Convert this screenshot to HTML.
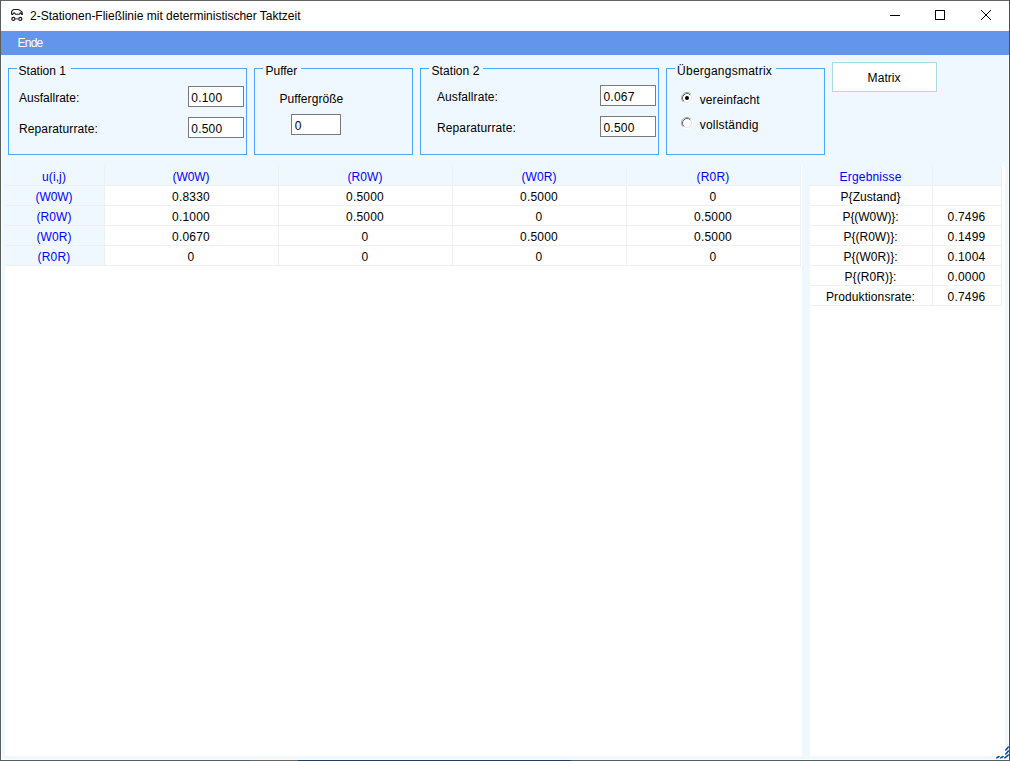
<!DOCTYPE html>
<html><head><meta charset="utf-8">
<style>
html,body{margin:0;padding:0;}
body{width:1010px;height:761px;position:relative;overflow:hidden;background:#F0F8FF;font-family:"Liberation Sans",sans-serif;font-size:12px;color:#000;}
.a{position:absolute;white-space:nowrap;line-height:14px;}
.b{position:absolute;box-sizing:border-box;}
.gb{position:absolute;box-sizing:border-box;border:1px solid #4AA8FF;}
.gl{position:absolute;box-sizing:border-box;background:#F0F8FF;line-height:14px;white-space:nowrap;}
.tb{position:absolute;box-sizing:border-box;border:1px solid #7A7A7A;background:#fff;}
.c{position:absolute;white-space:nowrap;line-height:14px;text-align:center;margin-left:-0.5px;}
.h{color:#0000FF;}
.vl{position:absolute;width:1px;background:#F0F0F0;}
.hl{position:absolute;height:1px;background:#F0F0F0;}
</style></head><body>
<!-- title bar -->
<div class="b" style="left:0;top:0;width:1010px;height:31px;background:#fff;"></div>
<svg class="b" style="left:0;top:0" width="40" height="31" viewBox="0 0 40 31">
  <path d="M11.7,14.4 C11.3,12.4 11.9,10 14,9.5 L18.2,9.5 Q19.2,9.6 20.9,11.1 Q22.6,11.9 22.4,14.4 L21.6,14.4 Q20.6,11.4 19.3,14.2 L15.6,14.2 Q14.1,11.4 12.6,14.4 Z" fill="none" stroke="#1a1a1a" stroke-width="1.15" stroke-linejoin="round"/>
  <ellipse cx="13.4" cy="18.9" rx="1.55" ry="1.55" fill="none" stroke="#1a1a1a" stroke-width="1.2"/>
  <ellipse cx="20.3" cy="18.9" rx="1.55" ry="1.55" fill="none" stroke="#1a1a1a" stroke-width="1.2"/>
  <line x1="14.9" y1="18.9" x2="18.8" y2="18.9" stroke="#555" stroke-width="1.2"/>
</svg>
<div class="a" style="left:30px;top:9px;">2-Stationen-Fließlinie mit deterministischer Taktzeit</div>
<div class="b" style="left:890px;top:15px;width:10px;height:1px;background:#000"></div>
<div class="b" style="left:935px;top:10px;width:10px;height:10px;border:1px solid #000"></div>
<svg class="b" style="left:981px;top:10px" width="10" height="10" viewBox="0 0 10 10"><path d="M0,0 L10,10 M10,0 L0,10" stroke="#000" stroke-width="1"/></svg>
<!-- menu -->
<div class="b" style="left:0;top:31px;width:1010px;height:24px;background:#6495ED;"></div>
<div class="a" style="left:17.5px;top:36px;color:#fff;letter-spacing:-0.75px">Ende</div>

<!-- Station 1 -->
<div class="gb" style="left:8px;top:68px;width:239px;height:87px;"></div>
<div class="gl" style="left:17px;top:64px;width:54px;padding-left:1.6px;letter-spacing:0px;">Station 1</div>
<div class="a" style="left:19px;top:91px;letter-spacing:0.02px;">Ausfallrate:</div>
<div class="a" style="left:19px;top:122px;letter-spacing:0.116px;">Reparaturrate:</div>
<div class="tb" style="left:188px;top:86px;width:56px;height:21px;"></div>
<div class="a" style="left:191.3px;top:91px;letter-spacing:0.194px;">0.100</div>
<div class="tb" style="left:188px;top:117px;width:56px;height:21px;"></div>
<div class="a" style="left:191.3px;top:122px;letter-spacing:0.194px;">0.500</div>

<!-- Puffer -->
<div class="gb" style="left:254px;top:68px;width:159px;height:87px;"></div>
<div class="gl" style="left:263px;top:64px;width:38px;padding-left:2.5px;letter-spacing:-0.003px;">Puffer</div>
<div class="a" style="left:279.5px;top:92px;letter-spacing:0.058px;">Puffergröße</div>
<div class="tb" style="left:291px;top:114px;width:50px;height:21px;"></div>
<div class="a" style="left:294.8px;top:119px;letter-spacing:0.326px;">0</div>

<!-- Station 2 -->
<div class="gb" style="left:420px;top:68px;width:239px;height:87px;"></div>
<div class="gl" style="left:429px;top:64px;width:54px;padding-left:2.5px;letter-spacing:0.070px;">Station 2</div>
<div class="a" style="left:437px;top:90px;letter-spacing:0.081px;">Ausfallrate:</div>
<div class="a" style="left:437px;top:121px;letter-spacing:0.116px;">Reparaturrate:</div>
<div class="tb" style="left:600px;top:85px;width:56px;height:21px;"></div>
<div class="a" style="left:603.5px;top:90px;letter-spacing:0.194px;">0.067</div>
<div class="tb" style="left:600px;top:116px;width:56px;height:21px;"></div>
<div class="a" style="left:603.5px;top:121px;letter-spacing:0.194px;">0.500</div>

<!-- Uebergangsmatrix -->
<div class="gb" style="left:666px;top:68px;width:159px;height:87px;"></div>
<div class="gl" style="left:675px;top:64px;width:101px;padding-left:2.05px;letter-spacing:0.245px;">Übergangsmatrix</div>
<svg class="b" style="left:681px;top:92px" width="12" height="12" viewBox="0 0 12 12">
  <circle cx="6" cy="6" r="5" fill="#fff"/>
  <path d="M2.11,9.89 A5.5,5.5 0 0 0 9.89,2.11" fill="none" stroke="#FFFFFF" stroke-width="1"/>
  <path d="M2.82,9.18 A4.5,4.5 0 0 0 9.18,2.82" fill="none" stroke="#E3E3E3" stroke-width="1"/>
  <path d="M2.11,9.89 A5.5,5.5 0 0 1 9.89,2.11" fill="none" stroke="#A0A0A0" stroke-width="1"/>
  <path d="M2.82,9.18 A4.5,4.5 0 0 1 9.18,2.82" fill="none" stroke="#696969" stroke-width="1"/>
  <circle cx="6" cy="6" r="2" fill="#000"/>
</svg>
<div class="a" style="left:699.7px;top:93px;letter-spacing:0.118px;">vereinfacht</div>
<svg class="b" style="left:681px;top:117px" width="12" height="12" viewBox="0 0 12 12">
  <circle cx="6" cy="6" r="5" fill="#fff"/>
  <path d="M2.11,9.89 A5.5,5.5 0 0 0 9.89,2.11" fill="none" stroke="#FFFFFF" stroke-width="1"/>
  <path d="M2.82,9.18 A4.5,4.5 0 0 0 9.18,2.82" fill="none" stroke="#E3E3E3" stroke-width="1"/>
  <path d="M2.11,9.89 A5.5,5.5 0 0 1 9.89,2.11" fill="none" stroke="#A0A0A0" stroke-width="1"/>
  <path d="M2.82,9.18 A4.5,4.5 0 0 1 9.18,2.82" fill="none" stroke="#696969" stroke-width="1"/>
</svg>
<div class="a" style="left:699.7px;top:118px;letter-spacing:0.209px;">vollständig</div>

<!-- Matrix button -->
<div class="b" style="left:832px;top:62px;width:105px;height:30px;background:#fff;border:1px solid #ADD8E6;"></div>
<div class="a" style="left:867.6px;top:71px;letter-spacing:0.056px;">Matrix</div>

<!-- main grid -->
<div class="b" style="left:5px;top:166px;width:797px;height:590px;background:#fff;"></div>
<div class="b" style="left:5px;top:166px;width:796px;height:20px;background:#F0F8FF;"></div>
<div class="b" style="left:5px;top:166px;width:100px;height:100px;background:#F0F8FF;"></div>
<div class="hl" style="left:5px;top:185px;width:796px;"></div>
<div class="hl" style="left:5px;top:205px;width:796px;"></div>
<div class="hl" style="left:5px;top:225px;width:796px;"></div>
<div class="hl" style="left:5px;top:245px;width:796px;"></div>
<div class="hl" style="left:5px;top:265px;width:796px;"></div>
<div class="vl" style="left:104px;top:166px;height:100px;"></div>
<div class="vl" style="left:278px;top:166px;height:100px;"></div>
<div class="vl" style="left:452px;top:166px;height:100px;"></div>
<div class="vl" style="left:626px;top:166px;height:100px;"></div>
<div class="vl" style="left:800px;top:166px;height:100px;"></div>

<div class="c h" style="left:5px;width:99px;top:170px;letter-spacing:0.111px;">u(i,j)</div>
<div class="c h" style="left:105px;width:173px;top:170px;letter-spacing:-0.064px;">(W0W)</div>
<div class="c h" style="left:279px;width:173px;top:170px;letter-spacing:0.068px;">(R0W)</div>
<div class="c h" style="left:453px;width:173px;top:170px;letter-spacing:0.068px;">(W0R)</div>
<div class="c h" style="left:627px;width:173px;top:170px;letter-spacing:0.200px;">(R0R)</div>

<div class="c h" style="left:5px;width:99px;top:190px;letter-spacing:-0.064px;">(W0W)</div>
<div class="c h" style="left:5px;width:99px;top:210px;letter-spacing:0.068px;">(R0W)</div>
<div class="c h" style="left:5px;width:99px;top:230px;letter-spacing:0.068px;">(W0R)</div>
<div class="c h" style="left:5px;width:99px;top:250px;letter-spacing:0.200px;">(R0R)</div>

<div class="c" style="left:105px;width:173px;top:190px;letter-spacing:0.216px;">0.8330</div>
<div class="c" style="left:279px;width:173px;top:190px;letter-spacing:0.216px;">0.5000</div>
<div class="c" style="left:453px;width:173px;top:190px;letter-spacing:0.216px;">0.5000</div>
<div class="c" style="left:627px;width:173px;top:190px;letter-spacing:0.326px;">0</div>

<div class="c" style="left:105px;width:173px;top:210px;letter-spacing:0.216px;">0.1000</div>
<div class="c" style="left:279px;width:173px;top:210px;letter-spacing:0.216px;">0.5000</div>
<div class="c" style="left:453px;width:173px;top:210px;letter-spacing:0.326px;">0</div>
<div class="c" style="left:627px;width:173px;top:210px;letter-spacing:0.216px;">0.5000</div>

<div class="c" style="left:105px;width:173px;top:230px;letter-spacing:0.216px;">0.0670</div>
<div class="c" style="left:279px;width:173px;top:230px;letter-spacing:0.326px;">0</div>
<div class="c" style="left:453px;width:173px;top:230px;letter-spacing:0.216px;">0.5000</div>
<div class="c" style="left:627px;width:173px;top:230px;letter-spacing:0.216px;">0.5000</div>

<div class="c" style="left:105px;width:173px;top:250px;letter-spacing:0.326px;">0</div>
<div class="c" style="left:279px;width:173px;top:250px;letter-spacing:0.326px;">0</div>
<div class="c" style="left:453px;width:173px;top:250px;letter-spacing:0.326px;">0</div>
<div class="c" style="left:627px;width:173px;top:250px;letter-spacing:0.326px;">0</div>

<!-- results grid -->
<div class="b" style="left:810px;top:166px;width:195px;height:590px;background:#fff;"></div>
<div class="b" style="left:810px;top:166px;width:192px;height:20px;background:#F0F8FF;"></div>
<div class="hl" style="left:810px;top:185px;width:192px;"></div>
<div class="hl" style="left:810px;top:205px;width:192px;"></div>
<div class="hl" style="left:810px;top:225px;width:192px;"></div>
<div class="hl" style="left:810px;top:245px;width:192px;"></div>
<div class="hl" style="left:810px;top:265px;width:192px;"></div>
<div class="hl" style="left:810px;top:285px;width:192px;"></div>
<div class="hl" style="left:810px;top:305px;width:192px;"></div>
<div class="vl" style="left:932px;top:166px;height:140px;"></div>
<div class="vl" style="left:1001px;top:166px;height:140px;"></div>

<div class="c h" style="left:810px;width:122px;top:170px;letter-spacing:0.196px;">Ergebnisse</div>
<div class="c" style="left:810px;width:122px;top:190px;letter-spacing:0.062px;">P{Zustand}</div>
<div class="c" style="left:810px;width:122px;top:210px;letter-spacing:-0.075px;">P{(W0W)}:</div>
<div class="c" style="left:810px;width:122px;top:230px;letter-spacing:-0.001px;">P{(R0W)}:</div>
<div class="c" style="left:810px;width:122px;top:250px;letter-spacing:-0.001px;">P{(W0R)}:</div>
<div class="c" style="left:810px;width:122px;top:270px;letter-spacing:0.072px;">P{(R0R)}:</div>
<div class="c" style="left:810px;width:122px;top:290px;letter-spacing:0.101px;">Produktionsrate:</div>
<div class="c" style="left:933px;width:68px;top:210px;letter-spacing:0.216px;">0.7496</div>
<div class="c" style="left:933px;width:68px;top:230px;letter-spacing:0.216px;">0.1499</div>
<div class="c" style="left:933px;width:68px;top:250px;letter-spacing:0.216px;">0.1004</div>
<div class="c" style="left:933px;width:68px;top:270px;letter-spacing:0.216px;">0.0000</div>
<div class="c" style="left:933px;width:68px;top:290px;letter-spacing:0.216px;">0.7496</div>

<!-- window borders -->
<div class="b" style="left:1px;top:55px;width:1px;height:705px;background:#F8FFFF;"></div>
<div class="b" style="left:1px;top:759px;width:1008px;height:1px;background:#F8FFFF;"></div>
<div class="b" style="left:1008px;top:55px;width:1px;height:705px;background:#F8FFFF;"></div>

<!-- size grip -->
<svg class="b" style="left:994px;top:744px" width="16" height="17" viewBox="0 0 16 17">
  <g stroke="#0046B0" stroke-width="1.5" stroke-linecap="round">
    <path d="M2.8,13.9 L5,12.5"/>
    <path d="M6.8,13.9 L9,12.5"/>
    <path d="M10.8,13.9 L14.4,11"/>
    <path d="M11.8,5.9 L14.4,3"/>
    <path d="M11.8,9.9 L14.4,7"/>
  </g>
</svg>

<div class="b" style="left:0;top:0;width:1010px;height:1px;background:#646464;"></div>
<div class="b" style="left:0;top:0;width:1px;height:761px;background:#5A5E5A;"></div>
<div class="b" style="left:1009px;top:0;width:1px;height:761px;background:#4A5060;"></div>
<div class="b" style="left:0;top:760px;width:1010px;height:1px;background:linear-gradient(to right,#5A5E5A 0,#5A5E5A 250px,#6A6460 250px,#6A6460 298px,#283A5A 298px,#283A5A 571px,#5A5E5A 571px);"></div>
</body></html>
